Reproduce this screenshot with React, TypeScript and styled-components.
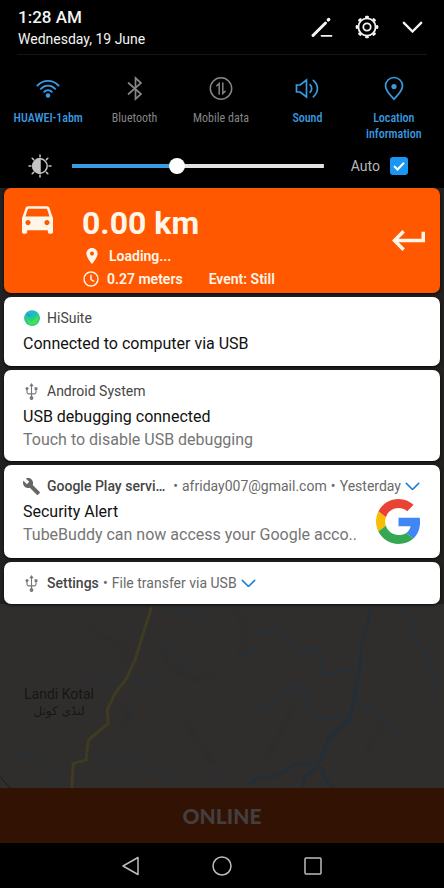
import React, { useState } from "react";
import styled, { createGlobalStyle } from "styled-components";

const GlobalStyle = createGlobalStyle`
  *, *::before, *::after { box-sizing: border-box; }
  body { margin: 0; background: #000; font-family: Roboto, "Liberation Sans", sans-serif; }
  h1, h2, p { margin: 0; font-weight: inherit; }
  button { margin: 0; padding: 0; border: 0; background: none; color: inherit; font: inherit; cursor: pointer; }
  svg { display: block; flex: none; }
`;

const BLUE = "#3a9be0";

const Screen = styled.div`
  display: flex;
  flex-direction: column;
  min-height: 100vh;
  background: #000;
`;

const Panel = styled.header`
  background: #000;
  padding-bottom: 10px;
`;

const StatusBar = styled.div`
  display: flex;
  align-items: center;
  justify-content: space-between;
  height: 55px;
  margin: 0 17px;
  border-bottom: 1px solid #161616;
  color: #f4f4f4;
`;

const Clock = styled.div`
  padding-left: 1px;
`;

const Time = styled.h1`
  font-size: 17px;
  font-weight: 500;
  line-height: 24px;
`;

const DateLine = styled.p`
  font-size: 14px;
  line-height: 20px;
`;

const Actions = styled.div`
  display: flex;
  align-items: center;
  gap: 21px;
  padding-right: 3px;
`;

const IconButton = styled.button<{ $wide?: boolean }>`
  display: grid;
  place-items: center;
  width: ${(p) => (p.$wide ? 34 : 24)}px;
  height: 24px;
`;

const Tiles = styled.div`
  display: grid;
  grid-template-columns: repeat(5, 1fr);
  padding: 21px 7px 0 5px;
`;

const Tile = styled.button<{ $on?: boolean }>`
  display: flex;
  flex-direction: column;
  align-items: center;
  gap: 9px;
  color: ${(p) => (p.$on ? BLUE : "#858585")};
  font-family: "Roboto Condensed", Roboto, sans-serif;
  font-size: 12px;
  font-weight: ${(p) => (p.$on ? 500 : 400)};
  line-height: 16px;
`;

const BrightnessRow = styled.div`
  display: flex;
  align-items: center;
  height: 24px;
  margin-top: 12px;
  padding: 0 36px 0 28px;
  color: #b8b8b8;
`;

const Slider = styled.input<{ $fill: number }>`
  appearance: none;
  flex: 1;
  min-width: 0;
  height: 16px;
  margin: 0 27px 0 20px;
  background: linear-gradient(to right, ${BLUE} ${(p) => p.$fill}%, #e2e2e2 ${(p) => p.$fill}%) center / 100% 4px no-repeat;
  &::-webkit-slider-thumb {
    appearance: none;
    width: 16px;
    height: 16px;
    border-radius: 50%;
    background: #fff;
  }
`;

const AutoLabel = styled.label`
  display: flex;
  align-items: center;
  gap: 10px;
  font-size: 14px;
  line-height: 20px;
`;

const CheckWrap = styled.span`
  display: grid;
  place-items: center;
  & > * { grid-area: 1 / 1; }
  svg { pointer-events: none; }
`;

const Check = styled.input`
  appearance: none;
  width: 18px;
  height: 18px;
  margin: 0;
  border-radius: 3px;
  border: 2px solid #777;
  &:checked { border: 0; background: #1a96f5; }
  &:not(:checked) + svg { visibility: hidden; }
`;

const Stage = styled.main`
  position: relative;
  flex: 1;
  overflow: hidden;
  background: #302e2c;
`;

const MapArt = styled.svg`
  position: absolute;
  inset: 0;
  width: 100%;
  height: 100%;
`;

const Shade = styled.div`
  position: relative;
  display: flex;
  flex-direction: column;
  gap: 4px;
  padding: 0 4px;
  background: rgba(16, 16, 16, 0.4);
`;

const Card = styled.article`
  min-height: 42px;
  padding: 11px 19px 10px 19px;
  border-radius: 7px;
  background: #fff;
  box-shadow: 0 1px 3px rgba(0, 0, 0, 0.8);
  color: #111;
`;

const TripCard = styled(Card)`
  display: flex;
  align-items: center;
  padding: 0 15px 0 18px;
  background: #ff5800;
  color: #fff6ea;
`;

const CarSlot = styled.div`
  align-self: flex-start;
  width: 60px;
  padding-top: 18px;
`;

const TripBody = styled.div`
  flex: 1;
  padding: 14px 0 3px;
`;

const Distance = styled.h2`
  font-size: 32px;
  font-weight: 700;
  line-height: 42px;
`;

const TripLine = styled.div`
  display: flex;
  align-items: center;
  height: 23px;
  font-size: 14px;
  font-weight: 600;
`;

const TripIcon = styled.span<{ $wide?: boolean }>`
  display: flex;
  width: ${(p) => (p.$wide ? 27 : 25)}px;
  padding-left: ${(p) => (p.$wide ? 4 : 1)}px;
`;

const EventText = styled.span`
  margin-left: 26px;
`;

const CardHead = styled.div`
  display: flex;
  align-items: center;
  height: 20px;
  font-size: 14px;
  line-height: 20px;
  white-space: nowrap;
  color: #6a6a6a;
`;

const AppIcon = styled.span`
  display: grid;
  place-items: center;
  width: 17px;
  margin-right: 7px;
`;

const AppName = styled.span<{ $strong?: boolean; $cut?: boolean }>`
  flex: none;
  width: ${(p) => (p.$cut ? "122px" : "auto")};
  color: #454545;
  font-weight: ${(p) => (p.$strong ? 500 : 400)};
`;

const Dot = styled.span`
  width: 13px;
  text-align: center;
`;

const Expand = styled.button`
  margin-left: 4px;
  color: #1a7fd6;
`;

const CardBody = styled.div`
  display: flex;
  justify-content: space-between;
  margin-top: 3px;
`;

const Lines = styled.div`
  min-width: 0;
  padding-top: 1px;
`;

const Title = styled.h2`
  font-size: 16px;
  line-height: 24px;
`;

const Detail = styled.p`
  font-size: 16px;
  line-height: 22px;
  color: #757575;
`;

const LogoSlot = styled.div`
  padding-bottom: 4px;
`;

const OnlineButton = styled.button`
  height: 55px;
  background: #321203;
  color: #423f3e;
  font-family: Lato, sans-serif;
  font-size: 21px;
  font-weight: 900;
`;

const NavBar = styled.nav`
  display: flex;
  align-items: center;
  justify-content: center;
  gap: 67px;
  height: 45px;
  color: #bdbdbd;
`;

const Chevron = ({ w = 15, stroke = 1.8 }: { w?: number; stroke?: number }) => (
  <svg width={w} height={w / 1.7} viewBox="0 0 17 10" fill="none" stroke="currentColor" strokeWidth={stroke} strokeLinecap="round">
    <path d="M1.5 1.5 8.5 8.5 15.5 1.5" />
  </svg>
);

const UsbIcon = () => (
  <svg width="13" height="17" viewBox="0 0 13 17" fill="none" stroke="#777" strokeWidth="1.1">
    <path d="M6.5 2v12.5M2 6v3.3c0 1 .6 1.6 1.6 1.6h5.8c1 0 1.6-.6 1.6-1.6V6" />
    <path d="M6.5 0 8.7 3.3H4.3z" fill="#777" stroke="none" />
    <circle cx="2" cy="5.5" r="1.5" fill="#777" stroke="none" />
    <path d="M9.6 4.2h2.8v2.8H9.6z" fill="#777" stroke="none" />
    <circle cx="6.5" cy="15" r="1.9" fill="#777" stroke="none" />
  </svg>
);

const WrenchIcon = () => (
  <svg width="17" height="17" viewBox="1 1 22 22" fill="#666">
    <path d="M22.7 19l-9.1-9.1c.9-2.3.4-5-1.5-6.9-2-2-5-2.4-7.4-1.3L9 6 6 9 1.6 4.7C.4 7.1.9 10.1 2.9 12.1c1.9 1.9 4.6 2.4 6.9 1.5l9.1 9.1c.4.4 1 .4 1.4 0l2.3-2.3c.5-.4.5-1.1.1-1.4z" />
  </svg>
);

const HiSuiteIcon = () => (
  <svg width="16" height="16" viewBox="0 0 16 16">
    <circle cx="8" cy="8" r="7.8" fill="#25b9c4" />
    <path d="M.6 6 5 5.2l3 2.6L13.8 3A7.8 7.8 0 0 1 8 15.8C3.5 15.8-.4 11 .6 6z" fill="#22cf86" />
    <path d="M3 8.5 7.5 12 14 5.5c1.5 5-2 9.5-6.5 9.3C5 14.5 3.5 12 3 8.5z" fill="#4be04b" />
    <path d="M1.5 4.5 5 3.5l2.5 2.8-3 .7z" fill="#2a9be0" />
  </svg>
);

const GoogleLogo = () => (
  <svg width="45" height="45" viewBox="0 0 48 48" role="img" aria-label="Google">
    <path fill="#EA4335" d="M24 9.5c3.54 0 6.71 1.22 9.21 3.6l6.85-6.85C35.9 2.38 30.47 0 24 0 14.62 0 6.51 5.38 2.56 13.22l7.98 6.19C12.43 13.72 17.74 9.5 24 9.5z" />
    <path fill="#4285F4" d="M46.98 24.55c0-1.57-.15-3.09-.38-4.55H24v9.02h12.94c-.58 2.96-2.26 5.48-4.78 7.18l7.73 6c4.51-4.18 7.09-10.36 7.09-17.65z" />
    <path fill="#FBBC05" d="M10.53 28.59c-.48-1.45-.76-2.99-.76-4.59s.27-3.14.76-4.59l-7.98-6.19C.92 16.46 0 20.12 0 24c0 3.88.92 7.54 2.56 10.78l7.97-6.19z" />
    <path fill="#34A853" d="M24 48c6.48 0 11.93-2.13 15.89-5.81l-7.73-6c-2.15 1.45-4.92 2.3-8.16 2.3-6.26 0-11.57-4.22-13.47-9.91l-7.98 6.19C6.51 42.62 14.62 48 24 48z" />
  </svg>
);

const tileProps = { width: 24, height: 25, viewBox: "0 0 24 25", fill: "none", stroke: "currentColor", strokeWidth: 1.5, strokeLinecap: "round" as const };

const tiles = [
  {
    name: "HUAWEI-1abm",
    on: true,
    icon: (
      <svg {...tileProps} strokeWidth={1.9}>
        <path d="M1.5 9.5C7.5 3.3 16.5 3.3 22.5 9.5M4.9 12.8C9 8.6 15 8.6 19.1 12.8M8.2 15.7c2.2-2.1 5.4-2.1 7.6 0" />
        <circle cx="12" cy="19.5" r="2.3" fill="currentColor" stroke="none" />
      </svg>
    ),
  },
  {
    name: "Bluetooth",
    icon: (
      <svg {...tileProps} strokeWidth={1.7}>
        <path d="M5.5 7 18 18 12.500 23V2L18 7 5.500 18" />
      </svg>
    ),
  },
  {
    name: "Mobile data",
    icon: (
      <svg {...tileProps}>
        <circle cx="12" cy="12.5" r="10.7" />
        <path d="M10.2 18V7.5L7.8 9.8M13.8 7v10.5l2.4-2.3" />
      </svg>
    ),
  },
  {
    name: "Sound",
    on: true,
    icon: (
      <svg {...tileProps} strokeWidth={1.7}>
        <path d="M1.5 9v7h3.7l6.3 5V4L5.2 9zM15 8.7c2.3 2 2.3 5.6 0 7.6M18.3 4.3c5.5 4.5 5.5 12 0 16.5" />
      </svg>
    ),
  },
  {
    name: "Location information",
    on: true,
    icon: (
      <svg {...tileProps} strokeWidth={1.7}>
        <path d="M12 23.2C8 19 3.5 14.5 3.5 10a8.5 8.5 0 0 1 17 0c0 4.5-4.5 9-8.5 13.2z" />
        <circle cx="12" cy="10.5" r="2.6" fill="currentColor" stroke="none" />
      </svg>
    ),
  },
];

const BrightnessIcon = () => (
  <svg width="24" height="24" viewBox="0 0 24 24" fill="none" stroke="#c4c4c4" strokeWidth="1.5" strokeLinecap="round">
    <circle cx="12" cy="12" r="7.2" />
    <path d="M12 4.8a7.2 7.2 0 0 0 0 14.4z" fill="#c4c4c4" />
    <path d="M12 1v2M12 21v2M1 12h2M21 12h2M4.2 4.2l1.4 1.4M18.4 18.4l1.4 1.4M4.2 19.8l1.4-1.4M18.4 5.6l1.4-1.4" />
  </svg>
);

const gearTeeth = [0, 45, 90, 135, 180, 225, 270, 315];

const GearIcon = () => (
  <svg width="24" height="24" viewBox="0 0 24 24" fill="none" stroke="currentColor" strokeWidth="1.8">
    <circle cx="12" cy="12" r="8.6" />
    <circle cx="12" cy="12" r="3.7" />
    {gearTeeth.map((a) => (
      <path key={a} d="M11.2 1.9h1.6" strokeWidth="2.4" transform={`rotate(${a} 12 12)`} strokeLinecap="round" />
    ))}
  </svg>
);

const MapBackdrop = () => (
  <MapArt viewBox="0 0 444 600" preserveAspectRatio="xMidYMin slice" fill="none" strokeLinejoin="round">
    <rect width="444" height="600" fill="#302e2c" />
    <g transform="translate(0 402) scale(.33333)">
      <g stroke="#2c2c2a" strokeWidth="18" opacity=".4">
        <path d="M260 90 310 140 380 170 370 220M480 170 510 230 580 270 640 250M370 350 390 390 360 420M560 400 640 520M890 340 830 450 790 520M700 60 740 110 720 200M1100 490 1150 400" />
      </g>
      <g stroke="#282f35" strokeWidth="5">
        <path d="M0 40 15 75M20 465 50 490 100 505 135 535 165 550 180 595M265 492 300 492 340 517 405 520 440 540 490 545 520 570M470 145 505 160 520 200 540 225 580 240M490 58 570 65 630 95M250 248 300 290 320 270 350 290M385 262 425 285 435 315M400 255 540 310M360 345 390 350 390 385M390 450 415 458 440 450M620 552 666 552 700 580" />
        <path d="M766 123 810 118 850 135 890 178 940 176 960 195 970 240 975 255 1070 233M700 210 725 190 765 182 766 165M770 358 830 335 850 290 880 283 890 300 920 320 940 375 960 387 1050 375M1060 335 1110 350 1145 390 1185 430 1190 450M1205 55 1230 85 1245 145 1270 175 1285 235 1305 250 1305 320" strokeWidth="6" stroke="#263039" />
        <path d="M1110 55 1105 100 1085 160 1080 235 1070 280 1060 340 1052 385 1000 430 970 480 960 515M960 520 890 522 830 557 770 565 750 580M955 530 915 560 905 595M965 530 970 560 1000 595" strokeWidth="9" stroke="#242e37" />
        <path d="M1050 390 990 440 960 515" strokeWidth="14" stroke="#242e37" />
      </g>
      <path d="M455 50 430 130 405 210 380 265 345 310 322 360 325 400 265 450 258 510 220 520 215 595" stroke="#3f3a22" strokeWidth="9" />
      <path d="M0 560 36 600" stroke="#1d1c1b" strokeWidth="3" />
    </g>
    <g fill="#171615" textAnchor="middle">
      <text x="59" y="511" fontFamily="Roboto, sans-serif" fontSize="14">Landi Kotal</text>
      <text x="59" y="527" fontFamily="'DejaVu Sans', sans-serif" fontSize="12">لنڈی کوتل</text>
    </g>
  </MapArt>
);

export default function App() {
  const [level, setLevel] = useState(41);
  const [auto, setAuto] = useState(true);

  return (
    <>
      <GlobalStyle />
      <Screen>
        <Panel>
          <StatusBar>
            <Clock>
              <Time>1:28 AM</Time>
              <DateLine>Wednesday, 19 June</DateLine>
            </Clock>
            <Actions>
              <IconButton aria-label="Edit shortcuts">
                <svg width="24" height="24" viewBox="0 0 24 24" stroke="currentColor" strokeLinecap="round">
                  <path d="M3 20.5 15.5 8" strokeWidth="3" />
                  <path d="M18.3 4.9l.4-.4" strokeWidth="3.4" />
                  <path d="M11.5 20.8h10" strokeWidth="1.8" />
                </svg>
              </IconButton>
              <IconButton aria-label="Settings">
                <GearIcon />
              </IconButton>
              <IconButton aria-label="Expand shortcuts">
                <Chevron w={21} stroke={1.9} />
              </IconButton>
            </Actions>
          </StatusBar>
          <Tiles>
            {tiles.map((t) => (
              <Tile key={t.name} $on={t.on} aria-pressed={!!t.on}>
                {t.icon}
                {t.name}
              </Tile>
            ))}
          </Tiles>
          <BrightnessRow>
            <BrightnessIcon />
            <Slider
              type="range"
              aria-label="Brightness"
              min={0}
              max={100}
              value={level}
              $fill={level}
              onChange={(e) => setLevel(Number(e.target.value))}
            />
            <AutoLabel>
              Auto
              <CheckWrap>
                <Check type="checkbox" checked={auto} onChange={(e) => setAuto(e.target.checked)} />
                <svg width="12" height="10" viewBox="0 0 12 10" fill="none" stroke="#fff" strokeWidth="2">
                  <path d="M1 5 4.5 8.5 11 1.8" />
                </svg>
              </CheckWrap>
            </AutoLabel>
          </BrightnessRow>
        </Panel>

        <Stage>
          <MapBackdrop />
          <Shade>
            <TripCard>
              <CarSlot>
                <svg width="31" height="28" viewBox="3 5 18 16" fill="currentColor">
                  <path d="M18.92 6.01C18.72 5.42 18.16 5 17.5 5h-11c-.66 0-1.21.42-1.42 1.01L3 12v8c0 .55.45 1 1 1h1c.55 0 1-.45 1-1v-1h12v1c0 .55.45 1 1 1h1c.55 0 1-.45 1-1v-8l-2.08-5.99zM6.5 16c-.83 0-1.5-.67-1.5-1.5S5.67 13 6.5 13s1.5.67 1.5 1.5S7.33 16 6.5 16zm11 0c-.83 0-1.5-.67-1.5-1.5s.67-1.5 1.5-1.5 1.5.67 1.5 1.5-.67 1.5-1.5 1.5zM5 11l1.5-4.5h11L19 11H5z" />
                </svg>
              </CarSlot>
              <TripBody>
                <Distance>0.00 km</Distance>
                <TripLine>
                  <TripIcon $wide>
                    <svg width="12" height="16" viewBox="5 2 14 20" fill="currentColor">
                      <path d="M12 2C8.13 2 5 5.13 5 9c0 5.25 7 13 7 13s7-7.75 7-13c0-3.87-3.13-7-7-7zm0 9.5c-1.38 0-2.5-1.12-2.5-2.5s1.12-2.5 2.5-2.5 2.5 1.12 2.5 2.5-1.12 2.5-2.5 2.5z" />
                    </svg>
                  </TripIcon>
                  Loading...
                </TripLine>
                <TripLine>
                  <TripIcon>
                    <svg width="16" height="16" viewBox="0 0 16 16" fill="none" stroke="currentColor" strokeWidth="1.4">
                      <circle cx="8" cy="8" r="7" />
                      <path d="M8 3.8V8.5l3.3 2" />
                    </svg>
                  </TripIcon>
                  0.27 meters
                  <EventText>Event: Still</EventText>
                </TripLine>
              </TripBody>
              <IconButton $wide aria-label="Return">
                <svg width="33" height="21" viewBox="2 6 19 12" fill="currentColor">
                  <path d="M19 7v4H5.83l3.58-3.59L8 6l-6 6 6 6 1.41-1.41L5.83 13H21V7z" />
                </svg>
              </IconButton>
            </TripCard>

            <Card>
              <CardHead>
                <AppIcon><HiSuiteIcon /></AppIcon>
                <AppName>HiSuite</AppName>
              </CardHead>
              <CardBody>
                <Lines><Title>Connected to computer via USB</Title></Lines>
              </CardBody>
            </Card>

            <Card>
              <CardHead>
                <AppIcon><UsbIcon /></AppIcon>
                <AppName>Android System</AppName>
              </CardHead>
              <CardBody>
                <Lines>
                  <Title>USB debugging connected</Title>
                  <Detail>Touch to disable USB debugging</Detail>
                </Lines>
              </CardBody>
            </Card>

            <Card>
              <CardHead>
                <AppIcon><WrenchIcon /></AppIcon>
                <AppName $strong $cut>Google Play servi…</AppName>
                <Dot>•</Dot>
                <span>afriday007@gmail.com</span>
                <Dot>•</Dot>
                <span>Yesterday</span>
                <Expand aria-label="Expand"><Chevron /></Expand>
              </CardHead>
              <CardBody>
                <Lines>
                  <Title>Security Alert</Title>
                  <Detail>TubeBuddy can now access your Google acco..</Detail>
                </Lines>
                <LogoSlot><GoogleLogo /></LogoSlot>
              </CardBody>
            </Card>

            <Card>
              <CardHead>
                <AppIcon><UsbIcon /></AppIcon>
                <AppName $strong>Settings</AppName>
                <Dot>•</Dot>
                <span>File transfer via USB</span>
                <Expand aria-label="Expand"><Chevron /></Expand>
              </CardHead>
            </Card>
          </Shade>
        </Stage>

        <OnlineButton>ONLINE</OnlineButton>
        <NavBar>
          <IconButton aria-label="Back">
            <svg width="20" height="20" viewBox="0 0 20 20" fill="none" stroke="currentColor" strokeWidth="1.5" strokeLinejoin="round">
              <path d="M17 1.5v17L2 10z" />
            </svg>
          </IconButton>
          <IconButton aria-label="Home">
            <svg width="20" height="20" viewBox="0 0 20 20" fill="none" stroke="currentColor" strokeWidth="1.5">
              <circle cx="10" cy="10" r="9" />
            </svg>
          </IconButton>
          <IconButton aria-label="Recent apps">
            <svg width="18" height="18" viewBox="0 0 18 18" fill="none" stroke="currentColor" strokeWidth="1.5">
              <rect x="1" y="1" width="16" height="16" rx="1" />
            </svg>
          </IconButton>
        </NavBar>
      </Screen>
    </>
  );
}
